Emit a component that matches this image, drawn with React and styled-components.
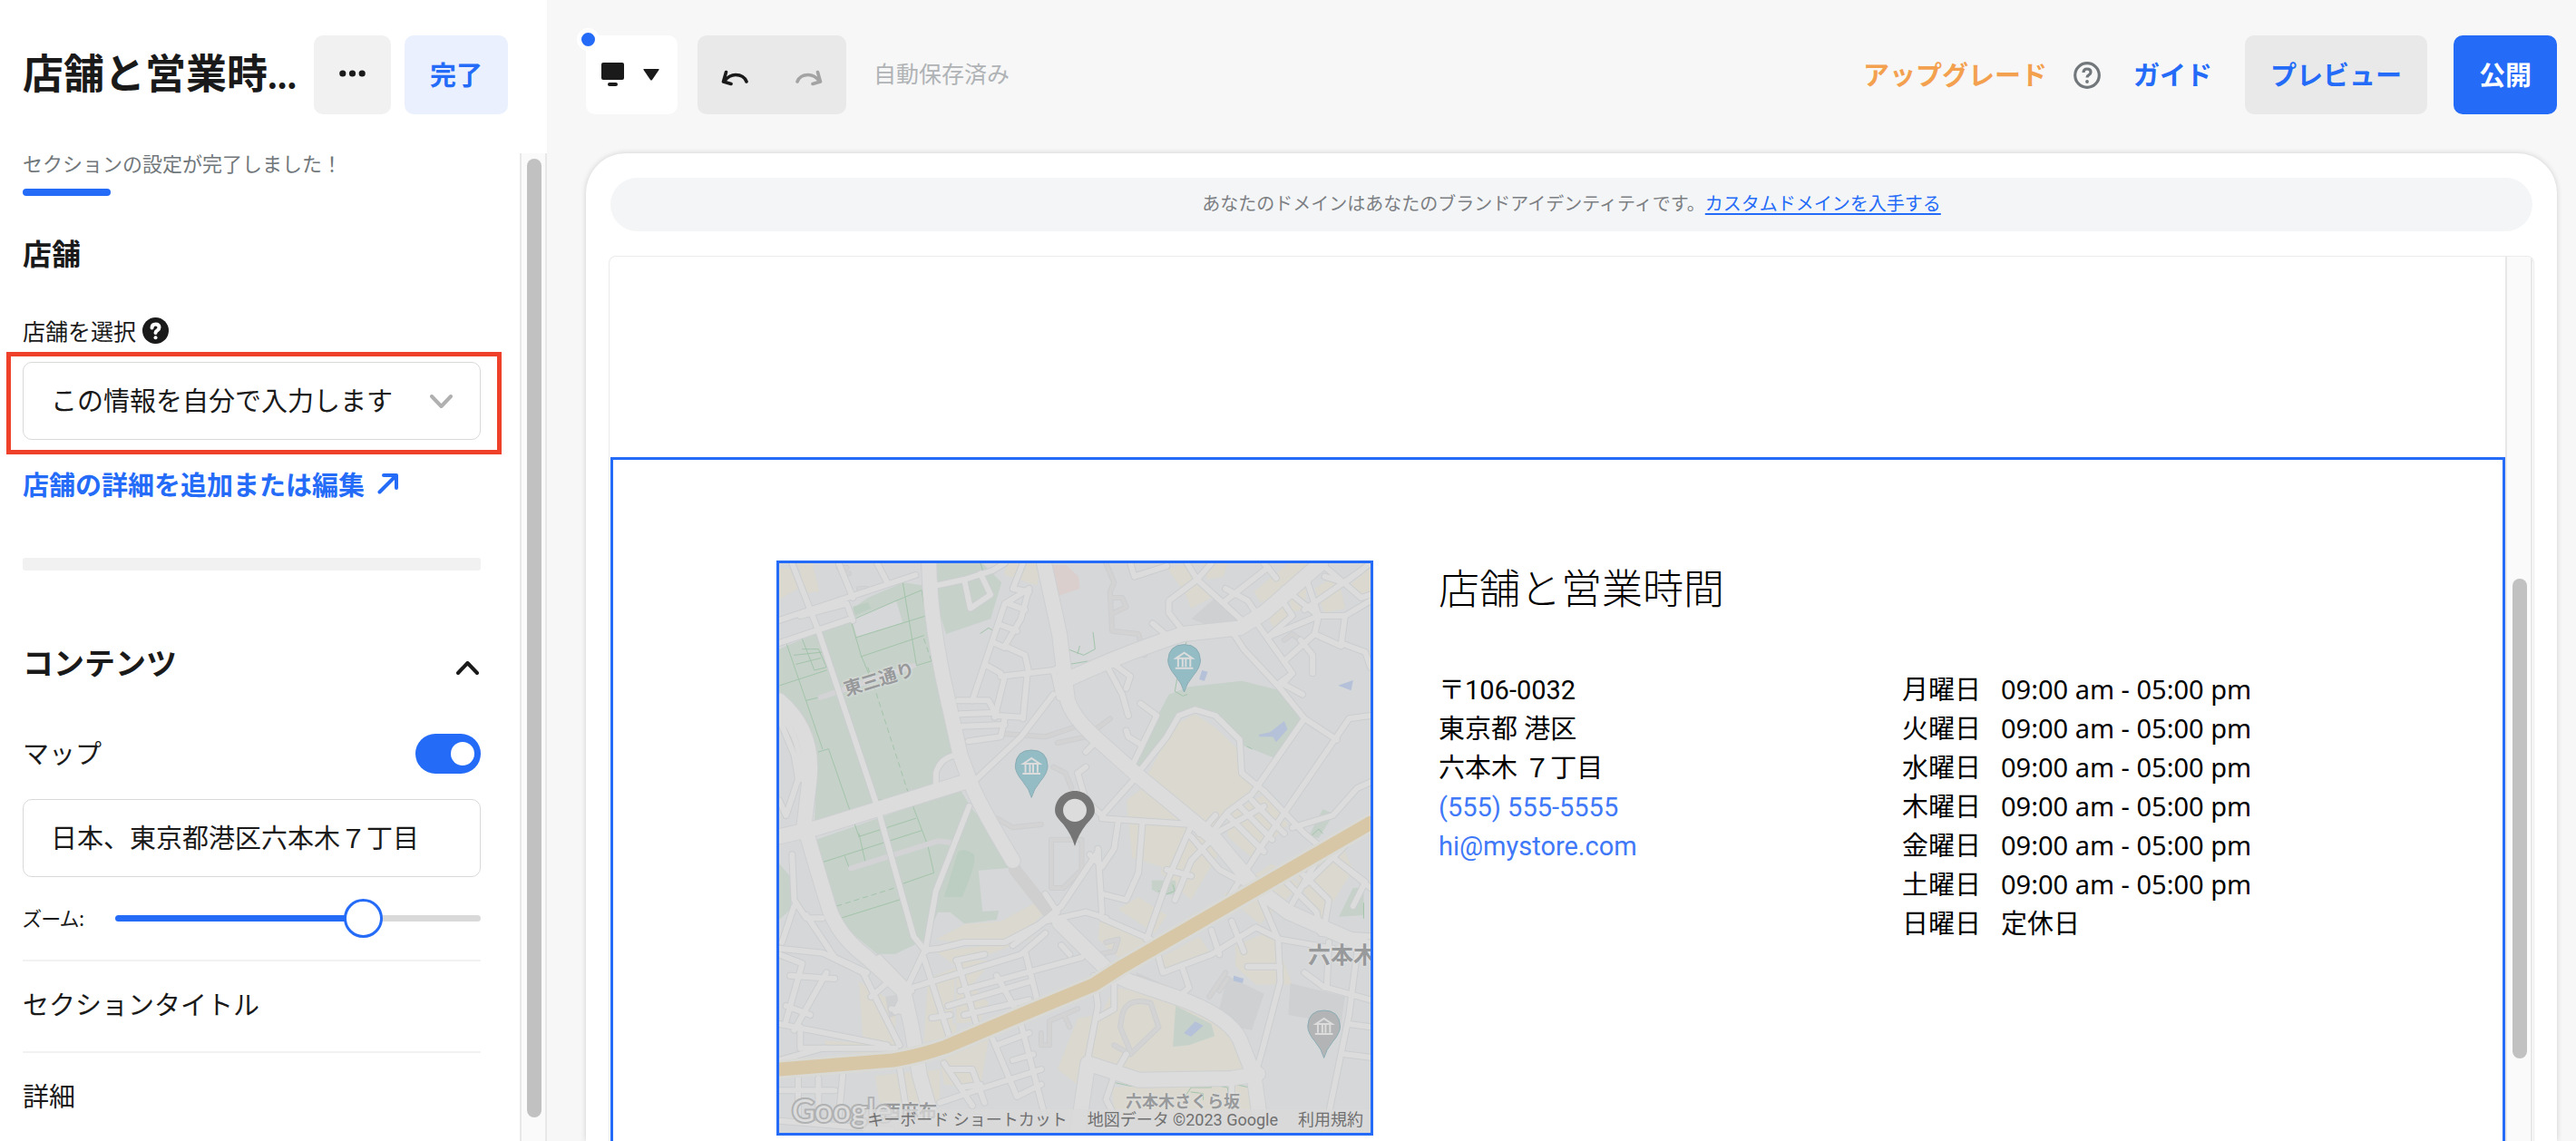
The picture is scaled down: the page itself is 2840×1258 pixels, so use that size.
import React, { useState } from "react";
import styled, { createGlobalStyle } from "styled-components";

const blue = "#246bf8";
const ink = "#1a1a1a";

const GlobalStyle = createGlobalStyle`
  *, *::before, *::after { box-sizing: border-box; }
  body { margin: 0; background: #f7f7f7; }
  body, button, input, select { font-family: "Noto Sans CJK JP", "Noto Sans", sans-serif; }
  button, input, select { margin: 0; color: inherit; }
  h1, h2, p { margin: 0; }
  svg { display: block; flex: none; }
`;

const Shell = styled.div`
  display: flex;
  height: 100vh;
  overflow: hidden;
  color: ${ink};
  font-size: 29px;
`;

/* ---------- Sidebar ---------- */

const Sidebar = styled.aside`
  flex: none;
  width: 603px;
  display: flex;
  flex-direction: column;
  background: #fff;
`;

const SidebarHeader = styled.header`
  display: flex;
  align-items: center;
  height: 169px;
  padding: 0 43px 4px 25px;
  gap: 15px;
`;

const PanelTitle = styled.h1`
  flex: 1;
  min-width: 0;
  padding-bottom: 4px;
  white-space: nowrap;
  font-family: Lato, "Noto Sans CJK JP", sans-serif;
  font-size: 45px;
  line-height: 66px;
  font-weight: 700;
`;

const Button = styled.button`
  display: flex;
  align-items: center;
  justify-content: center;
  height: 87px;
  padding: 0 28px 4px;
  border: 0;
  border-radius: 10px;
  background: ${(p) => p.$bg};
  color: ${(p) => p.$color || blue};
  font-size: 29px;
  line-height: 40px;
  font-weight: 700;
  white-space: nowrap;
`;

const SidebarBody = styled.div`
  flex: 1;
  min-height: 0;
  display: flex;
`;

const Settings = styled.div`
  flex: 1;
  min-width: 0;
  padding: 0 43px 0 25px;
`;

const Status = styled.p`
  font-size: 22px;
  line-height: 20px;
  color: #71777a;
  white-space: nowrap;
`;

const Progress = styled.div`
  width: 97px;
  height: 8px;
  margin-top: 19px;
  border-radius: 4px;
  background: ${blue};
`;

const SectionHeading = styled.h2`
  margin-top: 42px;
  font-size: 32px;
  line-height: 40px;
  font-weight: 700;
`;

const FieldLabel = styled.label`
  display: flex;
  align-items: center;
  gap: 7px;
  height: 30px;
  margin-top: 51px;
  font-size: 25px;
  line-height: 30px;
`;

const Highlight = styled.div`
  margin: 9px -23px 0 -18px;
  border: 5px solid #ef4129;
  padding: 6px 18px 11px 13px;
`;

const SelectWrap = styled.div`
  position: relative;
  color: #b0b0b0;
  svg { position: absolute; right: 31px; top: 36px; pointer-events: none; }
`;

const Select = styled.select`
  display: block;
  appearance: none;
  width: 100%;
  height: 86px;
  padding: 0 70px 4px 30px;
  border: 1px solid #d9d9d9;
  border-radius: 10px;
  background: #fff;
  color: ${ink};
  font-size: 29px;
`;

const TextInput = styled.input`
  display: block;
  width: 100%;
  height: 86px;
  margin-top: 28px;
  padding: 0 30px 4px;
  border: 1px solid #d9d9d9;
  border-radius: 10px;
  background: #fff;
  color: ${ink};
  font-size: 29px;
`;

const EditLink = styled.a`
  display: flex;
  align-items: center;
  gap: 14px;
  margin-top: 12px;
  color: ${blue};
  font-size: 29px;
  line-height: 40px;
  font-weight: 700;
  text-decoration: none;
  white-space: nowrap;
`;

const Separator = styled.div`
  height: 14px;
  margin-top: 62px;
  border-radius: 3px;
  background: #f1f1f1;
`;

const Accordion = styled.button`
  display: flex;
  align-items: flex-end;
  justify-content: space-between;
  width: 100%;
  margin-top: 81px;
  padding: 0 2px 0 0;
  border: 0;
  background: none;
  font-size: 34px;
  line-height: 40px;
  font-weight: 700;
  svg { margin-bottom: 6px; }
`;

const ToggleRow = styled.label`
  display: flex;
  align-items: center;
  justify-content: space-between;
  height: 44px;
  margin-top: 59px;
  span { padding-bottom: 4px; }
`;

const Toggle = styled.input`
  appearance: none;
  width: 72px;
  height: 44px;
  border-radius: 22px;
  padding: 9px 7px;
  background: ${(p) => (p.checked ? blue : "#c4c4c4")};
  &::before {
    content: "";
    display: block;
    width: 26px;
    height: 26px;
    margin-left: ${(p) => (p.checked ? "auto" : 0)};
    border-radius: 50%;
    background: #fff;
  }
`;

const ZoomRow = styled.label`
  display: flex;
  align-items: center;
  height: 43px;
  margin: 24px 0;
  font-size: 22px;
  font-feature-settings: "palt";
  span { flex: none; width: 102px; padding-bottom: 4px; }
`;

const Range = styled.input`
  appearance: none;
  flex: 1;
  min-width: 0;
  height: 43px;
  background: none;
  &::-webkit-slider-runnable-track {
    height: 7px;
    border-radius: 4px;
    background: linear-gradient(to right, ${blue} ${(p) => p.value}%, #d9d9d9 ${(p) => p.value}%);
  }
  &::-webkit-slider-thumb {
    appearance: none;
    width: 43px;
    height: 43px;
    margin-top: -18px;
    border: 3px solid ${blue};
    border-radius: 50%;
    background: #fff;
  }
`;

const PanelRow = styled.button`
  display: block;
  width: 100%;
  height: 101px;
  padding: 0 0 8px;
  border: 0;
  border-top: 2px solid #f2f2f2;
  background: none;
  text-align: left;
  font-size: 29px;
`;

const ScrollTrack = styled.div`
  flex: none;
  width: 30px;
  margin-right: ${(p) => p.$inset || "0"};
  padding: ${(p) => p.$offset} 4px 0 6px;
  border: solid #e8e8e8;
  border-width: 0 2px;
  background: #fafafa;
`;

const ScrollThumb = styled.div`
  height: ${(p) => p.$length};
  border-radius: 8px;
  background: #c1c1c1;
`;

/* ---------- Workspace ---------- */

const Workspace = styled.main`
  flex: 1;
  min-width: 0;
  display: flex;
  flex-direction: column;
  padding: 0 21px 0 43px;
`;

const Toolbar = styled.div`
  flex: none;
  display: flex;
  align-items: center;
  height: 169px;
  padding-bottom: 4px;
`;

const DeviceWrap = styled.div`
  position: relative;
  margin-right: 22px;
`;

const DeviceButton = styled(Button)`
  width: 101px;
  padding: 0 20px 0 17px;
  justify-content: space-between;
`;

const Dot = styled.span`
  position: absolute;
  left: -10px;
  top: -8px;
  width: 25px;
  height: 25px;
  border: 5px solid #fff;
  border-radius: 50%;
  background: ${blue};
`;

const History = styled.div`
  display: flex;
  border-radius: 10px;
  background: #e9e9e9;
`;

const HistoryButton = styled(Button)`
  width: 82px;
  padding: 6px 20px 0;
`;

const Saved = styled.p`
  flex: 1;
  margin-left: 30px;
  padding-bottom: 6px;
  font-size: 25px;
  line-height: 36px;
  color: #b0b3b6;
`;

const TopLink = styled.a`
  padding-bottom: 4px;
  color: ${(p) => p.$color};
  font-size: 29px;
  line-height: 40px;
  font-weight: 700;
  text-decoration: none;
  white-space: nowrap;
`;

const Actions = styled.div`
  display: flex;
  align-items: center;
  gap: 29px;
`;

const Guide = styled(TopLink)`
  margin: 0 7px;
`;

const Preview = styled.section`
  flex: 1;
  min-height: 0;
  display: flex;
  flex-direction: column;
  padding: 27px 25px 0;
  border-radius: 44px 44px 0 0;
  background: #fff;
  box-shadow: 0 0 6px rgba(0, 0, 0, 0.16);
`;

const DomainBar = styled.div`
  flex: none;
  display: flex;
  align-items: center;
  justify-content: center;
  height: 59px;
  margin: 0 2px;
  padding-bottom: 4px;
  border-radius: 30px;
  background: #f4f5f7;
  color: #7c7f83;
  font-size: 20px;
  line-height: 28px;
  white-space: nowrap;
  a { color: ${blue}; text-underline-offset: 3px; }
`;

const Frame = styled.div`
  flex: 1;
  min-height: 0;
  display: flex;
  margin-top: 27px;
  border: 1px solid #ebebeb;
  border-bottom: 0;
  border-radius: 8px 8px 0 0;
  overflow: hidden;
`;

const Site = styled.div`
  flex: 1;
  min-width: 0;
  display: flex;
  flex-direction: column;
  padding-top: 221px;
`;

const StoreSection = styled.section`
  flex: 1;
  min-height: 0;
  display: flex;
  gap: 72px;
  margin-left: 1px;
  padding: 111px 100px 0 180px;
  border: 3px solid ${blue};
  border-bottom: 0;
  color: #000;
`;

const Info = styled.div`
  flex: 1;
  min-width: 0;
`;

const StoreTitle = styled.h2`
  font-size: 45px;
  line-height: 58px;
  font-weight: 300;
`;

const Details = styled.div`
  display: grid;
  grid-template-columns: 511px 1fr;
  margin-top: 62px;
  font-size: 29px;
  line-height: 43px;
`;

const Contact = styled.address`
  padding-top: 2px;
  font-family: Roboto, "Noto Sans CJK JP", sans-serif;
  font-style: normal;
  white-space: nowrap;
  a { display: block; color: #3f79f8; text-decoration: none; }
`;

const Hours = styled.table`
  justify-self: start;
  border-collapse: collapse;
  font-family: "Noto Sans", "Noto Sans CJK JP", sans-serif;
  white-space: nowrap;
  th, td { height: 43px; padding: 0; text-align: left; font-weight: 400; line-height: 43px; }
  th { padding-right: 22px; }
`;

/* ---------- Map ---------- */

const MapBox = styled.div`
  position: relative;
  flex: none;
  width: 658px;
  height: 634px;
  border: 3px solid ${blue};
  background: #d5d7d9;
  overflow: hidden;
  & > svg { width: 100%; height: 100%; }
`;

const MapLabel = styled.span`
  position: absolute;
  left: ${(p) => p.$x}px;
  top: ${(p) => p.$y}px;
  color: #97999b;
  font-size: ${(p) => p.$size}px;
  line-height: 32px;
  font-weight: 700;
  white-space: nowrap;
  text-shadow: 0 0 3px #e2e2e2, 0 0 3px #e2e2e2;
  rotate: ${(p) => p.$turn || 0}deg;
`;

const GoogleMark = styled.span`
  position: absolute;
  left: 14px;
  bottom: 4px;
  color: #dcdcdc;
  font-family: Lato, sans-serif;
  font-size: 35px;
  line-height: 44px;
  -webkit-text-stroke: 4px #b0b1b2;
  paint-order: stroke fill;
`;

const Attribution = styled.div`
  position: absolute;
  right: 0;
  bottom: 0;
  display: flex;
  gap: 22px;
  height: 26px;
  padding: 0 8px 0 4px;
  background: rgba(217, 217, 217, 0.75);
  color: #707070;
  font-family: Roboto, "Noto Sans CJK JP", sans-serif;
  font-size: 18px;
  line-height: 24px;
  white-space: nowrap;
  a { color: inherit; text-decoration: none; }
`;

const PARKS = [
  "M60 340L215 255L225 215L262 180L350 130L400 140L412 240L440 470L475 690L430 740V810L130 935L137 690L110 600L43 505V350Z",
  "M125 985L490 815L520 880L640 1070L535 1082L545 1218L585 1215L580 1245L500 1258L465 1220L435 1220L405 1310L330 1358H285L200 1265Z",
  "M432 66H545L592 130L565 250L455 300L430 190Z",
  "M1005 500L1055 475L1185 455L1275 485L1338 580L1275 715L1190 670L1140 580L1070 550L1020 590L935 750L915 730Z",
  "M1385 880L1412 895L1375 975L1350 970Z",
  "M963 1115H1022V1160L990 1165L963 1145Z",
  "M1460 1140H1486V1230L1425 1235Z",
  "M1022 1530L1110 1590L1118 1630L1055 1660L1015 1665Z",
  "M43 1060L72 1105V1210L43 1245Z",
];

const BEIGE = [
  "M43 80L75 85L90 150L43 185Z",
  "M90 66H125L142 160L105 165Z",
  "M600 66H690L680 140L600 105Z",
  "M1000 80L1060 70L1110 180L1060 215L1045 165Z",
  "M1090 66H1150L1140 110L1100 120Z",
  "M1215 160L1300 66H1350L1250 190L1230 195Z",
  "M1300 170L1345 150L1340 220L1310 225Z",
  "M1240 225L1280 200L1305 240L1265 280Z",
  "M1450 140L1503 80V170L1480 180Z",
  "M1365 150L1400 120L1430 150L1440 215L1390 230Z",
  "M950 770L1020 600L1070 565L1120 610L1175 680L1180 760L1235 820L1150 890L1110 960Z",
  "M900 850L940 810L1060 935L1010 1080L915 1040Z",
  "M1010 1000L1080 960L1130 1020L1060 1180L985 1090Z",
  "M1150 900L1240 830L1300 930L1210 1040L1150 970Z",
  "M430 1310L500 1260L590 1250L680 1185L700 1220L640 1300L540 1330Z",
  "M430 1350L560 1330L680 1300L560 1360L410 1440L400 1650L480 1630L480 1400Z",
  "M480 1380H570L520 1460L560 1520L540 1580L470 1590Z",
  "M835 1240L960 1310L890 1380L830 1310Z",
  "M880 1210L930 1170L1000 1230L970 1290Z",
  "M1140 1160L1260 1060L1330 1130L1230 1260Z",
  "M1300 1060L1420 960L1460 1080L1380 1250Z",
  "M1170 1330L1260 1280L1310 1460H1220L1170 1400Z",
  "M985 1370L1080 1300L1110 1360L990 1430Z",
  "M870 1470L1030 1500L1150 1600L1210 1740L1160 1770L920 1780L800 1720L830 1580Z",
  "M865 1800L1090 1780L1210 1800V1900H870Z",
  "M780 1570L830 1560L790 1800L730 1740Z",
  "M240 1450L330 1520L330 1660L250 1650Z",
  "M155 1645L310 1660L290 1690L160 1680Z",
  "M280 1760L440 1740V1860L290 1850Z",
  "M440 1710L560 1640L540 1800L450 1790Z",
];

const GREY = [
  "M1060 250L1120 180L1190 260L1110 275Z",
  "M1150 1430L1240 1490L1210 1610L1120 1590Z",
  "M1305 1455L1440 1500L1430 1590L1300 1560Z",
  "M925 1420L1030 1480L1000 1510L925 1460Z",
  "M305 1500L345 1490L350 1550L315 1570Z",
];

const MAJOR = [
  "M413 66Q415 240 450 460L490 700L512 780Q530 850 620 1050",
  "M735 1255L860 1420L910 1450L1020 1500Q1150 1560 1180 1640L1215 1760L1235 1950",
  "M697 66L735 300L755 520Q770 580 830 650L930 770L1120 980L1220 1140L1300 1220L1503 1340",
  "M43 970L140 940L512 785",
  "M755 450Q900 360 1040 300L1180 280L1240 230L1380 66",
  "M43 520Q130 620 118 780L105 930Q130 1050 160 1180Q180 1290 260 1370L350 1480L370 1600L390 1760L420 1900",
  "M780 1950L805 1720L930 1775L1160 1770L1225 1755",
];

const TUNNEL = ["M625 1080L720 1240"];

const MEDIUM = [
  "M75 66L140 290L285 870L375 1300L405 1350",
  "M43 330L220 250M43 255L380 105",
  "M190 66L225 180M285 66L310 130M95 240L210 200L225 255",
  "M512 870L430 1150L405 1340L330 1550",
  "M430 810V760Q440 710 480 700",
  "M1160 290L1190 350L1280 480L1340 580L1420 650",
  "M915 735L975 570L935 530M935 750L1000 640L1030 570L1070 550L1120 570L1180 650L1185 760L1240 820",
  "M720 500L640 640L530 780M510 655L590 640L600 580",
  "M485 520L560 520L580 570L640 575M490 565L580 560M495 605L600 600",
  "M590 440L720 420L755 400M600 440L575 575M655 440L645 580M720 420L735 510",
  "M660 150L600 200L520 520M660 150L640 250L600 340L650 370L660 430M610 200L650 220M590 270L630 290M575 330L600 345M550 400L590 430M645 66L620 150L660 160",
  "M430 140L500 120L570 90L600 66M500 120L515 215L565 170L540 100",
  "M850 400L890 500L905 570M870 400L910 440L900 480",
  "M1190 260L1075 120L1050 66M1075 120L1005 190V230L1040 290M1075 120L1110 66M1145 190L1250 80M1145 150L1200 190L1215 220",
  "M910 66L920 110L1000 75M1240 66L1270 115M965 265L1000 305",
  "M1340 100L1375 240L1365 300L1430 340L1440 240L1375 240L1290 150M1440 240L1503 190M1375 240L1250 310L1310 240L1290 200M1365 300L1290 390M1220 260L1310 430L1290 460M1430 330L1490 360L1503 410",
  "M1380 66L1480 180L1503 170M1390 110L1440 130L1503 66M1340 220L1480 90",
  "M1310 430L1280 460L1335 500M1330 320L1360 370V430",
  "M1503 570L1450 580L1240 990L1120 1240M1340 580L1210 830L1150 890L1110 960",
  "M1240 820L1340 960L1430 1060L1503 1140M1503 790L1470 810L1410 900L1310 940M1210 850L1290 960M1180 870L1260 980M1150 900L1240 1020M1120 960L1240 870",
  "M1060 935L1000 1120L950 1310M840 910L1060 930M880 920L870 1010L840 1070L810 1030M940 920L930 1090L900 1180L840 1160M780 760L800 850L840 900L920 780M830 1010L840 1220",
  "M1060 970L1130 1080L1200 1130M1000 1080L1060 1100M1020 1180L1060 1050L1110 980M1080 960L1120 900",
  "M840 1240L960 1310M800 1220L700 1250L600 1320H500L440 1340L405 1345M800 1220L850 1240M830 1020L740 1200L640 1310M700 1160L730 1220L620 1330",
  "M370 1470L640 1360L700 1290M490 1480L790 1370M460 1530L660 1450M500 1560L660 1510M480 1380L550 1360M485 1390L530 1590M580 1430L630 1550M650 1350L680 1510M400 1370L465 1640M420 1570L465 1560",
  "M820 1430L830 1530L800 1740M870 1450V1540L830 1570M740 1330L760 1360",
  "M980 1370L990 1420L1110 1360L1220 1270L1280 1310L1410 1340M1110 1280L1130 1360M1040 1410L1055 1470L1020 1510M1160 1250L1190 1350",
  "M1230 1170L1275 1310L1280 1450L1235 1680L1220 1750M1200 1400H1280",
  "M1280 1100L1370 1220L1380 1290L1503 1300M1310 1060L1400 1180L1390 1260M1370 1050L1310 1190M1340 1130L1440 1000M1430 1060L1490 1120L1460 1200",
  "M1400 1320L1395 1470L1503 1510M1340 1420L1390 1470M1470 1350L1450 1560L1390 1950M1450 1590L1503 1600M1440 1690L1503 1700",
  "M900 1690L870 1760L850 1840L870 1890M1160 1790V1860",
  "M43 1340L150 1355L250 1420L340 1660M43 1360L100 1390L60 1580M43 1590L310 1660M95 1600V1670H160M110 1230L180 1370L260 1420M75 1030L80 1180L110 1240H150M80 1200L50 1320",
  "M290 1370L370 1480M200 1310L260 1390M320 1540L350 1550M160 1420L80 1610M70 1430L180 1440M60 1530L120 1560M270 1500L330 1430",
  "M43 1710L150 1670L330 1670M90 1770V1900M140 1770V1900M200 1760L190 1900M43 1910L320 1940M43 1810H180M340 1730L360 1900",
  "M450 1720L520 1860M460 1740H520L550 1850M490 1800L540 1790M440 1850L550 1800L690 1740M570 1640L630 1830L690 1790M580 1660L660 1620M640 1590L700 1900M620 1710L670 1690",
  "M43 850L60 900M43 580L80 700L90 780L60 900M43 560Q100 650 98 780",
  "M800 690L830 650M780 760L800 740M900 620L905 640L935 665",
];

const MINOR = [
  "M850 66L870 130L860 160L865 290L930 300L945 370M860 180H890L900 210L870 230",
  "M870 1660L910 1690L980 1600L960 1520Q900 1500 890 1560L885 1600L910 1680",
  "M600 630L700 640L790 600M730 660L800 640L860 580",
  "M715 980V1140H745L790 1080V980Z",
  "M690 1620V1660H710V1580L780 1540M750 1570L760 1600",
  "M1105 1500L1145 1420M1150 1440L1130 1480",
  "M850 1320L880 1310L870 1350L830 1360",
  "M1290 320L1310 300L1340 330",
  "M190 80H210M200 100H215M240 150H260M720 740L750 760L765 810",
  "M580 910L620 940L690 930",
];

const TRAILS = [
  "M62 335L150 680M45 470L160 420M348 128L382 403M332 190L395 155L400 200M220 255L332 190M220 255L245 370L270 450M232 312L410 238M245 375L400 305M380 405L430 385M98 310L130 420L160 410L140 350L100 350M80 370L150 360M85 400L145 380M110 520L140 510",
  "M140 690L165 680L240 970M285 850L365 840M365 840L410 1000L425 1090L350 1125M240 970L380 910M150 1055L395 950M240 960L255 1050M205 1035L215 1070M195 1240L350 1175",
  "M540 66L548 100M540 298L560 280L573 290M818 295L823 350L795 370L755 350M760 400L805 390L800 410L770 420M785 340L780 365",
  "M1080 310L1050 320L1045 340M1025 450L1020 490L1040 505L1050 500M1198 672L1210 680M1355 970L1375 945L1385 960",
  "M875 1785L910 1795H960M1045 1830L1060 1800H1110V1790L1150 1800L1155 1850M1060 1815L1090 1820V1840M1170 1790L1205 1800L1212 1880M1486 1190V1240M980 1150L1000 1160L1020 1150L1015 1130",
];

const MUSEUMS = [
  { x: 1043, y: 335, color: "#93bcc5" },
  { x: 666, y: 684, color: "#93bcc5" },
  { x: 1388, y: 1545, color: "#b3b4b5" },
];

function MuseumPin({ x, y, color }) {
  return (
    <g transform={`translate(${x} ${y})`}>
      <path d="M0 157Q-5 130 -22 103Q-40 75 -40 52Q-38 0 0 0Q38 0 40 52Q40 75 22 103Q5 130 0 157Z" fill={color} stroke="#8aacb4" strokeWidth="1" vectorEffect="non-scaling-stroke" />
      <path d="M-20 45L0 27L20 45ZM-15 48V74M-4 48V74M4 48V74M15 48V74M-22 78H22" fill="none" stroke="#dcdcdc" strokeWidth="2" vectorEffect="non-scaling-stroke" />
    </g>
  );
}

function Lines({ paths, color, width, ...rest }) {
  return (
    <g fill="none" stroke={color} strokeWidth={width} strokeLinejoin="round" strokeLinecap="round" {...rest}>
      {paths.map((d) => (
        <path key={d} d={d} vectorEffect="non-scaling-stroke" />
      ))}
    </g>
  );
}

function Areas({ paths, color }) {
  return <path d={paths.join("")} fill={color} />;
}

const HIGHWAY = ["M43 1740L325 1710Q390 1695 455 1665L640 1560L820 1460L890 1400L1503 925"];

function StreetMap() {
  return (
    <svg viewBox="43 66 1460 1884" preserveAspectRatio="none" aria-hidden="true">
      <Areas paths={BEIGE} color="#dad8cf" />
      <Areas paths={PARKS} color="#c6d1c9" />
      <path d="M485 1020Q500 1005 525 1030Q530 1060 495 1170H450Z" fill="#bccdc1" />
      <path d="M222 250L332 190L348 262L235 310Z" fill="#d5d7d9" />
      <path d="M225 210L262 195L270 215L232 237Z" fill="#bccdc1" />
      <path d="M715 72H752L782 110L785 150L730 175Z" fill="#dbcfcd" />
      <Areas paths={GREY} color="#cfd0d1" />
      <path d="M1255 625L1290 588L1298 615L1270 658L1262 640H1228V632ZM1423 470L1460 453L1455 487ZM1087 420L1101 425L1093 455L1080 450ZM1165 1430L1190 1440L1187 1455L1164 1447ZM1070 1582L1090 1595L1060 1632L1042 1620Z" fill="#b5c1d9" />
      <Lines paths={MINOR} color="#cdced0" width={6} />
      <Lines paths={MINOR} color="#d3d3d4" width={4} />
      <Lines paths={TRAILS} color="#a3c4aa" width={1} />
      <path d="M400 315L445 490M262 410L365 840M185 1200L340 1135" fill="none" stroke="#a3c4aa" strokeWidth="1" strokeDasharray="6 4" vectorEffect="non-scaling-stroke" />
      <Lines paths={["M145 510L375 405", "M220 1075L435 985L470 990"]} color="#d3d3d6" width={6} />
      <Lines paths={TUNNEL} color="#cfcfcf" width={14} />
      <Lines paths={MEDIUM} color="#cbcdcf" width={8} />
      <Lines paths={MAJOR} color="#cdcfd1" width={18} />
      <Lines paths={MEDIUM} color="#dcdcdc" width={6} />
      <Lines paths={MAJOR} color="#dcdcdc" width={16} />
      <Lines paths={HIGHWAY} color="#d9d9d6" width={21} />
      <Lines paths={HIGHWAY} color="#d7c7a6" width={15} />
      {MUSEUMS.map((pin) => (
        <MuseumPin key={pin.x} {...pin} />
      ))}
      <path fill="#757575" d="M773 1002Q765 965 745 930C732 910 724 900 724 884C724 848 746 819 773 819C800 819 822 848 822 884C822 900 814 910 801 930Q781 965 773 1002Z" />
      <ellipse cx="773" cy="883" rx="29" ry="38" fill="#dcdcdc" />
    </svg>
  );
}

/* ---------- Icons ---------- */

const Chevron = ({ up }) => (
  <svg width="25" height="15" viewBox="0 0 25 15" fill="none" stroke="currentColor" strokeWidth="4" strokeLinecap="round" strokeLinejoin="round" aria-hidden="true">
    <path d={up ? "M2 13L12.500 2L23 13" : "M2 2L12.500 13L23 2"} />
  </svg>
);

const HelpSolid = () => (
  <svg width="29" height="29" viewBox="0 0 29 29" aria-hidden="true">
    <circle cx="14.500" cy="14.500" r="14.500" fill={ink} />
    <path d="M10.500 11.500Q10.500 7.500 14.500 7.500Q18.500 7.500 18.500 11Q18.500 13 16.500 14.200Q14.500 15.300 14.500 17" fill="none" stroke="#fff" strokeWidth="4" strokeLinecap="round" />
    <circle cx="14.500" cy="22.300" r="2" fill="#fff" />
  </svg>
);

const HelpOutline = () => (
  <svg width="30" height="30" viewBox="0 0 30 30" aria-hidden="true">
    <circle cx="15" cy="15" r="13.300" fill="none" stroke="#71777a" strokeWidth="3.200" />
    <path d="M11 12Q11 8 15 8Q19 8 19 11.500Q19 13.500 17 14.600Q15 15.700 15 17.500" fill="none" stroke="#71777a" strokeWidth="3.200" />
    <circle cx="15" cy="22" r="1.900" fill="#71777a" />
  </svg>
);

const MoreIcon = () => (
  <svg width="29" height="8" viewBox="0 0 29 8" fill={ink} aria-hidden="true">
    <circle cx="3.800" cy="4" r="3.600" />
    <circle cx="14.500" cy="4" r="3.600" />
    <circle cx="25.200" cy="4" r="3.600" />
  </svg>
);

const ArrowOut = () => (
  <svg width="24" height="24" viewBox="0 0 24 24" fill="none" stroke="currentColor" strokeWidth="4" strokeLinecap="round" strokeLinejoin="round" aria-hidden="true">
    <path d="M2.500 21.500L20.500 3.500M7 3H21V17" />
  </svg>
);

const DesktopIcon = () => (
  <svg width="25" height="28" viewBox="0 0 25 28" fill={ink} aria-hidden="true">
    <rect x="0" y="0" width="25" height="19" rx="2" />
    <rect x="7" y="22" width="11" height="4" rx="2" />
  </svg>
);

const CaretIcon = () => (
  <svg width="18" height="13" viewBox="0 0 18 13" fill={ink} aria-hidden="true">
    <path d="M1 0H17Q18 0 17.500 1L10 12Q9 13 8 12L.5 1Q0 0 1 0Z" />
  </svg>
);

const CurveArrow = ({ flip, color }) => (
  <svg width="30" height="18" viewBox="0 0 30 18" fill="none" stroke={color} strokeWidth="3.600" strokeLinecap="round" strokeLinejoin="round" aria-hidden="true">
    <path transform={flip ? "translate(30 0) scale(-1 1)" : undefined} d="M5.500 2.500L2.500 13L11 15.500M3.500 12.500Q9 5.500 16 5.500Q25 5.500 28 13" />
  </svg>
);

const WEEK = ["月曜日", "火曜日", "水曜日", "木曜日", "金曜日", "土曜日"];

export default function App() {
  const [mapOn, setMapOn] = useState(true);
  const [zoom, setZoom] = useState(70);

  return (
    <>
      <GlobalStyle />
      <Shell>
        <Sidebar>
          <SidebarHeader>
            <PanelTitle>店舗と営業時...</PanelTitle>
            <Button $bg="#f1f1f1" aria-label="その他">
              <MoreIcon />
            </Button>
            <Button $bg="#eaf0fe">完了</Button>
          </SidebarHeader>
          <SidebarBody>
            <Settings>
              <Status>セクションの設定が完了しました！</Status>
              <Progress />
              <SectionHeading>店舗</SectionHeading>
              <FieldLabel htmlFor="store">
                店舗を選択
                <HelpSolid />
              </FieldLabel>
              <Highlight>
                <SelectWrap>
                  <Select id="store">
                    <option>この情報を自分で入力します</option>
                  </Select>
                  <Chevron />
                </SelectWrap>
              </Highlight>
              <EditLink href="#stores">
                店舗の詳細を追加または編集
                <ArrowOut />
              </EditLink>
              <Separator />
              <Accordion aria-expanded="true">
                コンテンツ
                <Chevron up />
              </Accordion>
              <ToggleRow>
                <span>マップ</span>
                <Toggle type="checkbox" role="switch" checked={mapOn} onChange={(e) => setMapOn(e.target.checked)} />
              </ToggleRow>
              <TextInput aria-label="住所" defaultValue="日本、東京都港区六本木７丁目" />
              <ZoomRow>
                <span>ズーム:</span>
                <Range type="range" min="0" max="100" value={zoom} onChange={(e) => setZoom(Number(e.target.value))} />
              </ZoomRow>
              <PanelRow>セクションタイトル</PanelRow>
              <PanelRow>詳細</PanelRow>
            </Settings>
            <ScrollTrack $offset="6px">
              <ScrollThumb $length="calc(100% - 26px)" />
            </ScrollTrack>
          </SidebarBody>
        </Sidebar>

        <Workspace>
          <Toolbar>
            <DeviceWrap>
              <DeviceButton $bg="#fff" aria-label="デバイス">
                <DesktopIcon />
                <CaretIcon />
              </DeviceButton>
              <Dot />
            </DeviceWrap>
            <History>
              <HistoryButton $bg="none" aria-label="元に戻す">
                <CurveArrow color={ink} />
              </HistoryButton>
              <HistoryButton $bg="none" aria-label="やり直す">
                <CurveArrow flip color="#a3a3a3" />
              </HistoryButton>
            </History>
            <Saved>自動保存済み</Saved>
            <Actions>
              <TopLink href="#upgrade" $color="#f3a04f">アップグレード</TopLink>
              <HelpOutline />
              <Guide href="#guide" $color={blue}>ガイド</Guide>
              <Button $bg="#e9e9e9">プレビュー</Button>
              <Button $bg={blue} $color="#fff">公開</Button>
            </Actions>
          </Toolbar>

          <Preview>
            <DomainBar>
              <span>あなたのドメインはあなたのブランドアイデンティティです。</span>
              <a href="#domain">カスタムドメインを入手する</a>
            </DomainBar>
            <Frame>
              <Site>
                <StoreSection>
                  <MapBox>
                    <StreetMap />
                    <MapLabel $x={70} $y={111} $size={20} $turn={-17}>東三通り</MapLabel>
                    <MapLabel $x={583} $y={414} $size={25}>六本木</MapLabel>
                    <MapLabel $x={114} $y={588} $size={20}>西麻布</MapLabel>
                    <MapLabel $x={382} $y={576} $size={18}>六本木さくら坂</MapLabel>
                    <GoogleMark>Google</GoogleMark>
                    <Attribution>
                      <span>キーボード ショートカット</span>
                      <span>地図データ ©2023 Google</span>
                      <a href="#terms">利用規約</a>
                    </Attribution>
                  </MapBox>
                  <Info>
                    <StoreTitle>店舗と営業時間</StoreTitle>
                    <Details>
                      <Contact>
                        〒106-0032
                        <br />
                        東京都 港区
                        <br />
                        六本木 ７丁目
                        <a href="tel:5555555555">(555) 555-5555</a>
                        <a href="mailto:hi@mystore.com">hi@mystore.com</a>
                      </Contact>
                      <Hours>
                        <tbody>
                          {WEEK.map((day) => (
                            <tr key={day}>
                              <th scope="row">{day}</th>
                              <td>09:00 am - 05:00 pm</td>
                            </tr>
                          ))}
                          <tr>
                            <th scope="row">日曜日</th>
                            <td>定休日</td>
                          </tr>
                        </tbody>
                      </Hours>
                    </Details>
                  </Info>
                </StoreSection>
              </Site>
              <ScrollTrack $offset="355px" $inset="1px">
                <ScrollThumb $length="529px" />
              </ScrollTrack>
            </Frame>
          </Preview>
        </Workspace>
      </Shell>
    </>
  );
}
